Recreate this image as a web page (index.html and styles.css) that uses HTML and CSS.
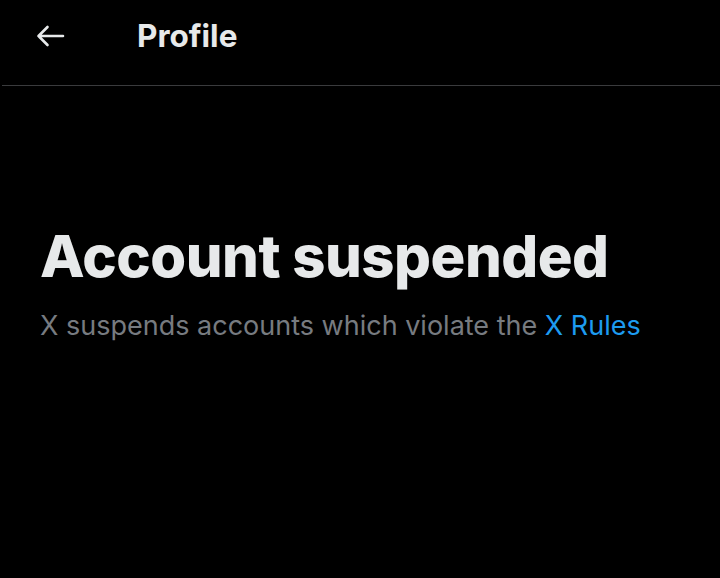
FILE: index.html
```html
<!DOCTYPE html>
<html>
<head>
<meta charset="utf-8">
<link rel="stylesheet" href="styles.css">
</head>
<body>
<div class="page">
  <header class="topbar">
    <button class="back" aria-label="Back">
      <svg width="30" height="24" viewBox="0 0 30 24"><path d="M28 12H3.5M12.5 3L3.5 12l9 9" fill="none" stroke="#e7e9ea" stroke-width="2.6" stroke-linecap="round" stroke-linejoin="round"/></svg>
    </button>
    <h1 class="title">Profile</h1>
  </header>
  <main class="content">
    <h2 class="headline">Account suspended</h2>
    <p class="sub">X suspends accounts which violate the <a class="link" href="#">X Rules</a></p>
  </main>
</div>
</body>
</html>
```
FILE: styles.css
```css
html, body { margin: 0; padding: 0; background: #000; }
body { font-family: Inter, "Noto Sans", sans-serif; color: #e7e9ea; }
.page { width: 720px; height: 578px; overflow: hidden; }
.topbar {
  display: flex; align-items: center;
  height: 86px; margin-left: 2px; padding-bottom: 14px;
  border-bottom: 1px solid #3a3b3d;
  box-sizing: border-box;
}
.back {
  background: none; border: none; padding: 0;
  margin-left: 33px; width: 30px; height: 30px;
  display: flex; align-items: center; justify-content: center;
}
.title {
  margin: 0 0 0 72px; font-size: 31.5px; font-weight: 700; letter-spacing: 0;
  color: #e7e9ea;
}
.content { padding: 135px 0 0 40px; }
.headline {
  margin: 0; font-size: 58px; font-weight: 800; line-height: 70px; color: #e7e9ea;
  letter-spacing: -0.5px;
}
.sub {
  margin: 17px 0 0; font-size: 27px; color: #777b80; font-weight: 400; line-height: 36px;
}
.link { color: #1d9bf0; text-decoration: none; }
```
